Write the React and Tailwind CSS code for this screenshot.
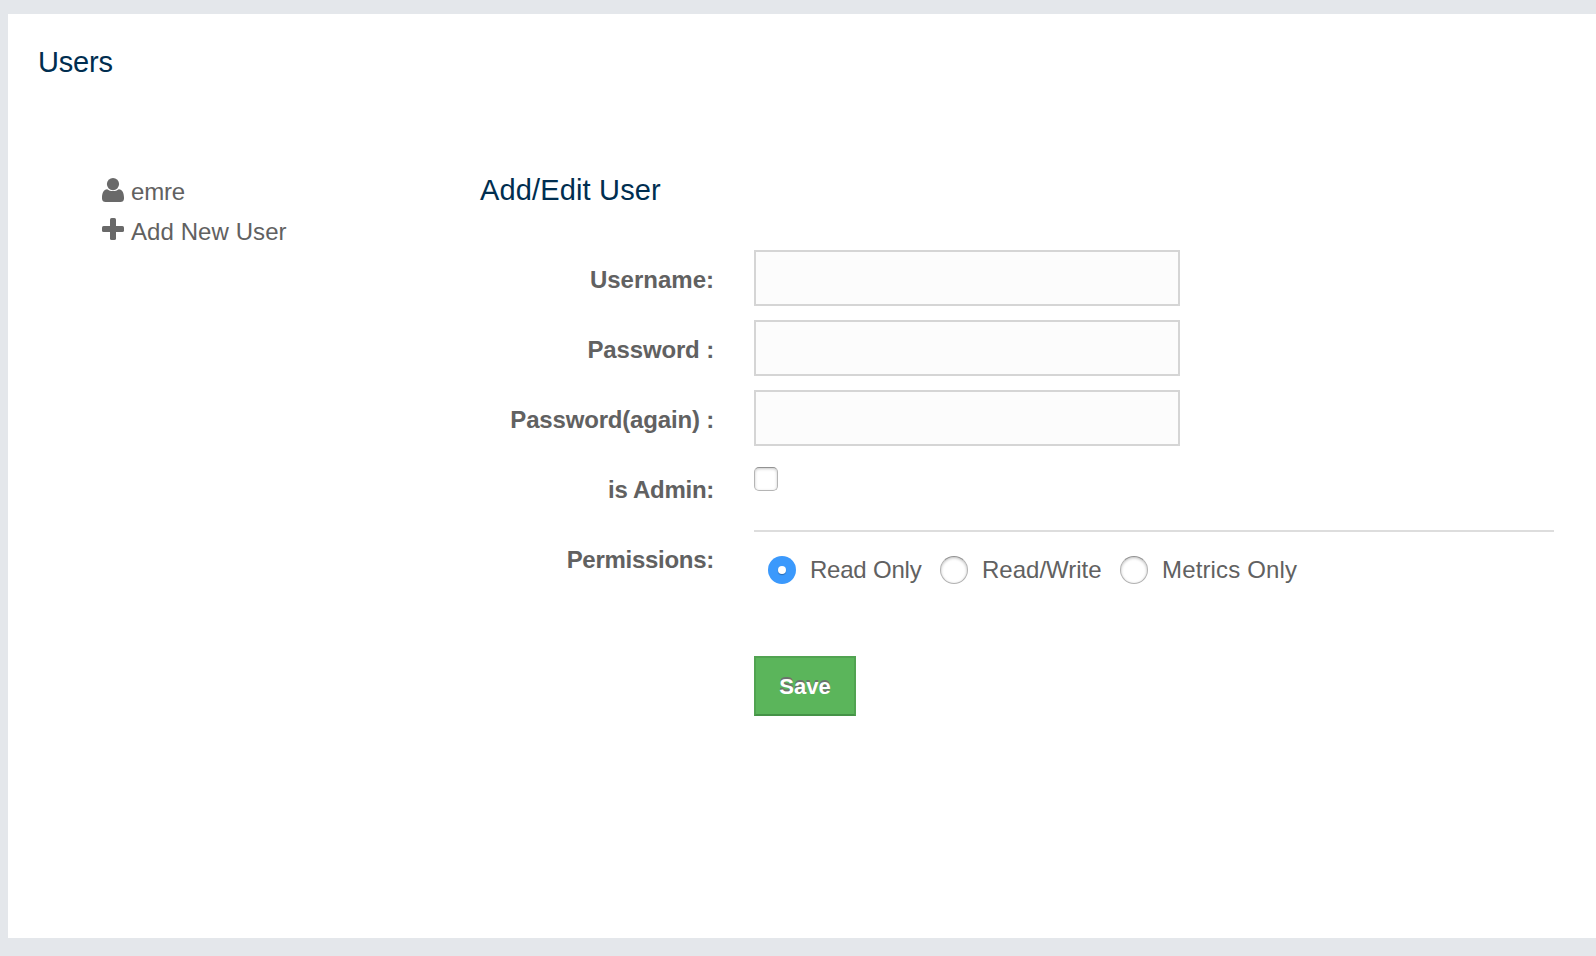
import React from "react";

function UserIcon() {
  return (
    <svg className="h-6 w-[22px] shrink-0" viewBox="0 0 22 24" fill="currentColor">
      <circle cx="11" cy="6.1" r="6.1" />
      <path d="M5.200 11.200C1.700 11.500 0 15 0 19.600v.8C0 22.600 1.500 24 3.600 24h14.800c2.100 0 3.600-1.400 3.600-3.600v-.8c0-4.600-1.700-8.100-5.200-8.400-1.600 1.200-3.600 1.900-5.800 1.900s-4.200-.7-5.800-1.900z" />
    </svg>
  );
}

function PlusIcon() {
  return (
    <svg className="h-[22px] w-[22px] shrink-0" viewBox="0 0 22 22" fill="currentColor">
      <rect x="0" y="8" width="22" height="6" rx="1.6" />
      <rect x="8" y="0" width="6" height="22" rx="1.6" />
    </svg>
  );
}

function Row({ label, spacing = "", children }) {
  return (
    <div className="flex h-[70px] items-start">
      <label
        className={"mr-10 w-[234px] shrink-0 pt-2.5 text-right text-[24px] font-bold leading-10 " + spacing}
      >
        {label}
      </label>
      {children}
    </div>
  );
}

function TextInput({ type = "text" }) {
  return (
    <input
      type={type}
      className="h-14 w-[426px] border-2 border-[#d5d5d5] bg-[#fcfcfc] px-3 text-[24px] outline-none"
    />
  );
}

function Radio({ label, checked, className, spacing }) {
  return (
    <label className={"flex items-center whitespace-nowrap " + className}>
      {checked ? (
        <span className="flex h-7 w-7 shrink-0 items-center justify-center rounded-full bg-[#3b99fc]">
          <span className="h-2 w-2 rounded-full bg-white shadow-[0_1px_1px_rgba(0,0,0,0.3)]" />
        </span>
      ) : (
        <span className="h-7 w-7 shrink-0 rounded-full border border-[#b2b2b2] border-t-[#929292] bg-white shadow-[inset_0_1px_3px_rgba(0,0,0,0.25)]" />
      )}
      <span className={"ml-3.5 text-[24px] leading-7 " + spacing}>{label}</span>
    </label>
  );
}

export default function App() {
  return (
    <div className="h-[956px] w-[1596px] overflow-hidden bg-[#e4e7eb] pl-2 pt-3.5 font-['Liberation_Sans',Arial,sans-serif] text-[#616161]">
      <main className="h-[924px] bg-white pl-[30px] pt-7">
        <h1 className="text-[29px] leading-[41px] tracking-[-0.2px] text-[#002e50]">Users</h1>
        <div className="mt-[87px] flex items-start">
          <nav className="ml-16 mt-0.5 w-[378px] text-[24px] leading-10">
            <div className="flex h-10 items-start">
              <span className="mt-1.5 text-[#696969]">
                <UserIcon />
              </span>
              <span className="ml-[7px] tracking-[-0.2px]">emre</span>
            </div>
            <div className="flex h-10 items-start">
              <span className="mt-1.5 text-[#696969]">
                <PlusIcon />
              </span>
              <span className="ml-[7px] tracking-[0.08px]">Add New User</span>
            </div>
          </nav>
          <form className="w-[1074px]" onSubmit={(e) => e.preventDefault()}>
            <h2 className="mb-[39px] text-[29px] leading-[41px] tracking-[0.15px] text-[#002e50]">
              Add/Edit User
            </h2>
            <Row label="Username:">
              <TextInput />
            </Row>
            <Row label="Password :" spacing="tracking-[-0.15px]">
              <TextInput type="password" />
            </Row>
            <Row label="Password(again) :" spacing="tracking-[-0.18px]">
              <TextInput type="password" />
            </Row>
            <Row label="is Admin:" spacing="tracking-[-0.28px]">
              <span className="mt-[7px] h-6 w-6 rounded-[5px] border border-[#b5b5b5] border-t-[#929292] bg-white shadow-[inset_0_1px_3px_rgba(0,0,0,0.22)]" />
            </Row>
            <Row label="Permissions:" spacing="tracking-[-0.28px]">
              <div className="h-[70px] w-[800px] border-t-2 border-[#dddddd] pl-3.5 pt-6">
                <div className="flex">
                  <Radio label="Read Only" checked className="w-[172px]" spacing="tracking-[-0.22px]" />
                  <Radio label="Read/Write" className="w-[180px]" spacing="tracking-normal" />
                  <Radio label="Metrics Only" className="" spacing="tracking-[0.15px]" />
                </div>
              </div>
            </Row>
            <button
              type="submit"
              className="ml-[274px] mt-14 flex h-[60px] w-[102px] items-center justify-center border-2 border-[#51a351] border-b-[#459247] bg-[#5bb55b] text-[22px] font-bold text-white [text-shadow:0_-2px_0_rgba(110,110,110,0.95)]"
            >
              Save
            </button>
          </form>
        </div>
      </main>
    </div>
  );
}
